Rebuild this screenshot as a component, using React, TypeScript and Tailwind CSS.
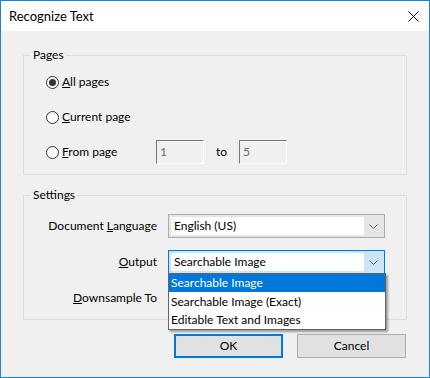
import React from "react";

function Radio({ checked }: { checked?: boolean }) {
  return (
    <span className="flex h-[13px] w-[13px] shrink-0 items-center justify-center rounded-full border border-[#333333] bg-white">
      {checked && <span className="h-[7px] w-[7px] rounded-full bg-[#333333]" />}
    </span>
  );
}

function Chevron({ color = "#606060" }: { color?: string }) {
  return (
    <svg width="9" height="5" viewBox="0 0 9 5">
      <path d="M0.5 0.5 L4.5 4.5 L8.5 0.5" fill="none" stroke={color} strokeWidth="1" />
    </svg>
  );
}

function Combo({ value, focused }: { value: string; focused?: boolean }) {
  return (
    <div
      className={
        "flex h-[24px] w-[217px] items-stretch border p-[2px] " +
        (focused ? "border-[#0078d7] bg-[#cce4f7]" : "border-[#adadad] bg-[#e5e5e5]")
      }
    >
      <div className="flex flex-1 items-center bg-white pl-[3px] leading-none">{value}</div>
      <div className="flex w-[18px] items-center justify-center">
        <Chevron />
      </div>
    </div>
  );
}

function GroupBox({
  title,
  className,
  children,
}: {
  title: string;
  className?: string;
  children: React.ReactNode;
}) {
  return (
    <div className={"relative border border-[#dcdcdc] " + (className ?? "")}>
      <span className="absolute left-[7px] top-[-9px] bg-[#f0f0f0] px-[2px] leading-[16px]">{title}</span>
      {children}
    </div>
  );
}

function DisabledBox({ value }: { value: string }) {
  return (
    <div className="flex h-[24px] w-[48px] items-center border-b border-l border-r border-t border-b-white border-l-[#7a7a7a] border-r-white border-t-[#7a7a7a] bg-[#f0f0f0] pl-[3px] text-[#6d6d6d] leading-none">
      {value}
    </div>
  );
}

export default function App() {
  return (
    <div className="flex h-[378px] w-[430px] flex-col border border-[#1883d7] bg-[#f0f0f0] font-['Lato',sans-serif] text-[12px] text-black">
      {/* Title bar */}
      <div className="flex h-[30px] shrink-0 items-center justify-between bg-white pl-[8px] pr-[10px]">
        <span className="text-[13px] leading-none">Recognize Text</span>
        <svg width="11" height="11" viewBox="0 0 11 11">
          <path d="M0.5 0.5 L10.5 10.5 M10.5 0.5 L0.5 10.5" stroke="#000" strokeWidth="1" />
        </svg>
      </div>

      {/* Body */}
      <div className="flex flex-1 flex-col px-[22px] pt-[24px]">
        <GroupBox title="Pages" className="h-[120px]">
          <div className="flex flex-col pl-[22px] pt-[14px]">
            <div className="flex h-[24px] items-center gap-[3px]">
              <Radio checked />
              <span>
                <span className="underline">A</span>ll pages
              </span>
            </div>
            <div className="mt-[11px] flex h-[24px] items-center gap-[3px]">
              <Radio />
              <span>
                <span className="underline">C</span>urrent page
              </span>
            </div>
            <div className="mt-[11px] flex h-[24px] items-center">
              <div className="flex w-[110px] items-center gap-[3px]">
                <Radio />
                <span>
                  <span className="underline">F</span>rom page
                </span>
              </div>
              <DisabledBox value="1" />
              <span className="w-[35px] text-center">to</span>
              <DisabledBox value="5" />
            </div>
          </div>
        </GroupBox>

        <GroupBox title="Settings" className="mt-[20px] h-[125px]">
          <div className="flex flex-col pt-[18px]">
            <div className="flex h-[24px] items-center">
              <span className="w-[133px] text-right">
                Document <span className="underline">L</span>anguage
              </span>
              <div className="ml-[11px]">
                <Combo value="English (US)" />
              </div>
            </div>
            <div className="mt-[12px] flex h-[24px] items-center">
              <span className="w-[133px] text-right">
                <span className="underline">O</span>utput
              </span>
              <div className="relative ml-[11px]">
                <Combo value="Searchable Image" focused />
                <div className="absolute left-0 top-[23px] z-10 w-[218px] border border-[#646464] bg-white shadow-[2px_2px_2px_rgba(0,0,0,0.35)]">
                  <div className="flex h-[18px] items-center bg-[#0078d7] pl-[2px] text-white">Searchable Image</div>
                  <div className="flex h-[19px] items-center pl-[2px]">Searchable Image (Exact)</div>
                  <div className="flex h-[18px] items-center pl-[2px]">Editable Text and Images</div>
                </div>
              </div>
            </div>
            <div className="mt-[12px] flex h-[24px] items-center">
              <span className="w-[133px] text-right">
                <span className="underline">D</span>ownsample To
              </span>
              <div className="ml-[11px]">
                <Combo value="" />
              </div>
            </div>
          </div>
        </GroupBox>

        <div className="mt-[14px] flex justify-end gap-[14px] pr-[1px]">
          <button className="flex h-[24px] w-[109px] items-center justify-center border-2 border-[#0078d7] bg-[#e1e1e1] leading-none">
            OK
          </button>
          <button className="flex h-[24px] w-[109px] items-center justify-center border border-[#adadad] bg-[#e1e1e1] leading-none">
            Cancel
          </button>
        </div>
      </div>
    </div>
  );
}
